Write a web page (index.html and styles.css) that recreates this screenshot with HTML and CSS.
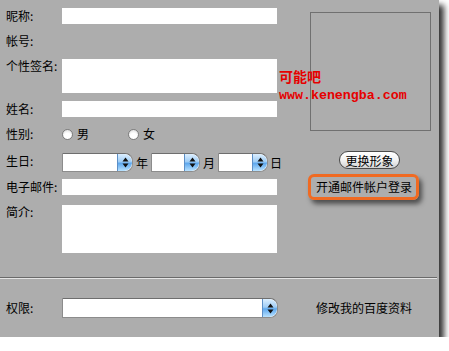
FILE: index.html
```html
<!DOCTYPE html>
<html lang="zh">
<head>
<meta charset="utf-8">
<title>个人资料</title>
<link rel="stylesheet" href="styles.css">
</head>
<body>
<div class="panel">
  <div class="top">
    <div class="form">
      <div class="lbl">昵称:</div>
      <input class="field" type="text">
      <div class="lbl">帐号:</div>
      <div class="val"></div>
      <div class="lbl lbl-top">个性签名:</div>
      <textarea class="field area"></textarea>
      <div class="lbl">姓名:</div>
      <input class="field" type="text">
      <div class="lbl">性别:</div>
      <div class="radios">
        <span class="radio"></span><span class="rtext">男</span>
        <span class="radio r2"></span><span class="rtext">女</span>
      </div>
      <div class="lbl">生日:</div>
      <div class="birth">
        <div class="sel s-year"><span class="box"></span><span class="cap"><svg width="7" height="11" viewBox="0 0 7 11"><path d="M3.5 0.5 L6.5 4.5 H0.5 Z M0.5 6.5 H6.5 L3.5 10.5 Z" fill="#111"/></svg></span></div>
        <span class="unit">年</span>
        <div class="sel s-month"><span class="box"></span><span class="cap"><svg width="7" height="11" viewBox="0 0 7 11"><path d="M3.5 0.5 L6.5 4.5 H0.5 Z M0.5 6.5 H6.5 L3.5 10.5 Z" fill="#111"/></svg></span></div>
        <span class="unit">月</span>
        <div class="sel s-day"><span class="box"></span><span class="cap"><svg width="7" height="11" viewBox="0 0 7 11"><path d="M3.5 0.5 L6.5 4.5 H0.5 Z M0.5 6.5 H6.5 L3.5 10.5 Z" fill="#111"/></svg></span></div>
        <span class="unit unit-last">日</span>
      </div>
      <div class="lbl">电子邮件:</div>
      <input class="field" type="text">
      <div class="lbl lbl-top">简介:</div>
      <textarea class="field area2"></textarea>
    </div>
    <div class="side">
      <div class="avatar"></div>
      <button class="pill">更换形象</button>
      <div class="mailbtn">开通邮件帐户登录</div>
    </div>
    <div class="mark">
      <div class="mark-cn">可能吧</div>
      <div class="mark-url">www.kenengba.com</div>
    </div>
  </div>
  <div class="sep"></div>
  <div class="bottom">
    <div class="lbl">权限:</div>
    <div class="sel s-perm"><span class="box"></span><span class="cap"><svg width="7" height="11" viewBox="0 0 7 11"><path d="M3.5 0.5 L6.5 4.5 H0.5 Z M0.5 6.5 H6.5 L3.5 10.5 Z" fill="#111"/></svg></span></div>
    <div class="link">修改我的百度资料</div>
  </div>
</div>
</body>
</html>
```
FILE: styles.css
```css
* { box-sizing: border-box; }
html, body { margin: 0; padding: 0; background: #fff; }
body {
  font-family: "Noto Sans CJK SC", "Liberation Sans", sans-serif;
  font-size: 12px;
  color: #000;
}
.panel {
  width: 439px;
  height: 337px;
  background: #adadad;
  box-shadow: 5px 5px 6px rgba(0,0,0,0.8);
  display: flex;
  flex-direction: column;
}
.top {
  position: relative;
  height: 277px;
  display: flex;
}
.form {
  width: 308px;
  padding: 8px 0 0 6px;
  display: grid;
  grid-template-columns: 56px 215px;
  grid-template-rows: 16px 16px 34px 16px 16px 19px 16px 48px;
  row-gap: 9px;
  align-content: start;
}
.lbl {
  line-height: 16px;
  white-space: nowrap;
  align-self: center;
}
.lbl-top { align-self: start; }
.field {
  display: block;
  width: 215px;
  height: 16px;
  border: 0;
  margin: 0;
  padding: 0;
  background: #fff;
  outline: none;
  resize: none;
}
.area { height: 34px; margin-top: 1px; }
.area2 { height: 48px; margin-top: 1px; }
.radios {
  display: flex;
  align-items: center;
  height: 16px;
}
.radio {
  width: 11px;
  height: 11px;
  border-radius: 50%;
  border: 1px solid #7d7d7d;
  background: radial-gradient(circle at 50% 70%, #ffffff 0 40%, #d6d6d6 100%);
}
.rtext { margin-left: 4px; line-height: 16px; }
.r2 { margin-left: 39px; }
.birth {
  display: flex;
  align-items: center;
  height: 19px;
  margin-top: 2px;
}
.birth > * { flex-shrink: 0; }
.unit { line-height: 16px; margin: 0 3px; }
.unit-last { margin: 0 0 0 2px; }
.sel {
  display: flex;
  height: 19px;
  border: 1px solid #8c8c8c;
  border-top-color: #6e6e6e;
  border-radius: 0 8px 8px 0;
  background: #fff;
  overflow: hidden;
}
.sel .box { flex: 1; }
.sel .cap {
  width: 15px;
  display: flex;
  align-items: center;
  justify-content: center;
  border-left: 1px solid #5d8fc6;
  border-radius: 0 8px 8px 0;
  background: linear-gradient(#dcefff 0%, #9fcdf6 45%, #5ea8ee 55%, #b9e2ff 100%);
}
.s-year { width: 71px; }
.s-month { width: 49px; }
.s-day { width: 50px; }
.s-perm { width: 216px; height: 20px; }
.side {
  width: 131px;
  padding-top: 12px;
  display: flex;
  flex-direction: column;
  align-items: flex-start;
}
.avatar {
  margin-left: 2px;
  width: 121px;
  height: 119px;
  border: 1px solid #707070;
}
.pill {
  margin: 20px 0 0 31px;
  width: 61px;
  height: 18px;
  padding: 0;
  border: 1px solid #4a4a4a;
  border-radius: 9px;
  background: linear-gradient(#ffffff, #f2f2f2 50%, #d2d2d2);
  font-family: inherit;
  font-size: 12px;
  line-height: 15px;
  color: #000;
}
.mailbtn {
  margin-top: 5px;
  width: 111px;
  height: 26px;
  border: 3px solid #f06a22;
  border-radius: 6px;
  padding-left: 5px;
  line-height: 20px;
  white-space: nowrap;
  box-shadow: 3px 4px 5px rgba(0,0,0,0.55);
}
.mark {
  position: absolute;
  left: 279px;
  top: 66px;
  color: #e60000;
}
.mark-cn {
  font-weight: 700;
  font-size: 14px;
  line-height: 20px;
}
.mark-url {
  margin-top: 3px;
  font-family: "Liberation Mono", monospace;
  font-weight: 700;
  font-size: 13.3px;
  line-height: 14px;
}
.sep {
  height: 2px;
  border-top: 1px solid #6a6a6a;
  border-bottom: 1px solid #e4e4e4;
  width: 437px;
}
.bottom {
  display: flex;
  align-items: center;
  padding: 19px 0 0 6px;
}
.bottom .lbl { width: 56px; }
.link { margin-left: 38px; line-height: 16px; }
```
